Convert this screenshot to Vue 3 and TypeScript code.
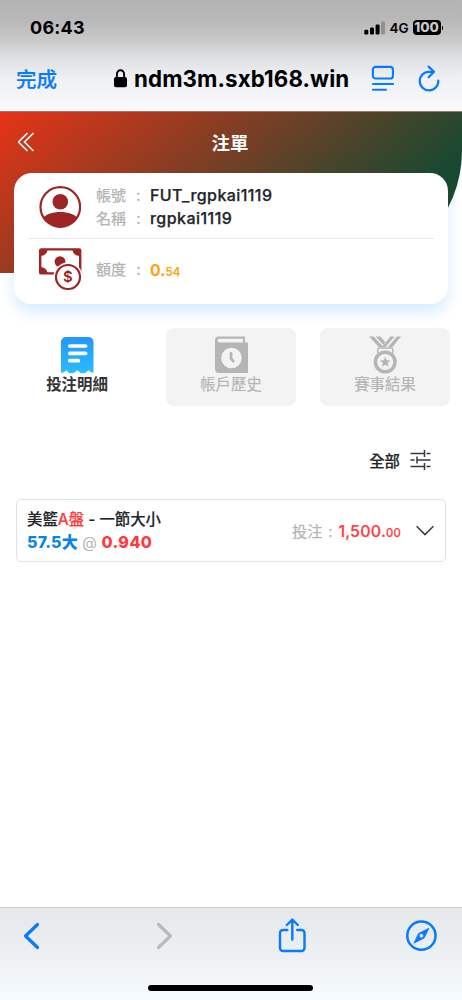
<script setup lang="ts">
import { ref } from 'vue'

interface Tab {
  id: string
  label: string
}

const tabs: Tab[] = [
  { id: 'bets', label: '投注明細' },
  { id: 'history', label: '帳戶歷史' },
  { id: 'results', label: '賽事結果' },
]
const active = ref('bets')
</script>

<template>
  <div class="screen">
    <header class="browser">
      <div class="status">
        <span class="time">06:43</span>
        <span class="right">
          <svg class="signal" width="22" height="14" viewBox="0 0 22 14">
            <rect x="0.3" y="8.8" width="4" height="4.6" rx="1.2" />
            <rect x="6" y="6.5" width="4" height="6.9" rx="1.2" />
            <rect x="11.6" y="3.5" width="4" height="9.9" rx="1.2" />
            <rect x="17" y="0.6" width="4" height="12.8" rx="1.2" fill="#919191" />
          </svg>
          <span class="net">4G</span>
          <span class="battery">100</span>
          <i class="tip"></i>
        </span>
      </div>
      <div class="address">
        <span class="done">完成</span>
        <span class="site">
          <svg width="13" height="19" viewBox="0 0 13 19">
            <path d="M2.9 9V5.2a3.6 4 0 0 1 7.2 0V9" fill="none" stroke="#000" stroke-width="1.9" />
            <rect x="0" y="8" width="13" height="10.2" rx="2" />
          </svg>
          <span class="host">ndm3m.sxb168.win</span>
        </span>
        <svg class="reader" width="23" height="27" viewBox="0 0 23 27" fill="none" stroke="#087aff" stroke-width="2.1" stroke-linecap="round">
          <rect x="1.9" y="1.9" width="20" height="11.6" rx="2.6" />
          <path d="M2 19h20M2 24.800h13" />
        </svg>
        <svg class="reload" width="22" height="27" viewBox="0 0 22 27" fill="none" stroke="#087aff" stroke-width="2.2" stroke-linecap="round" stroke-linejoin="round">
          <path d="M15.400 6.800H11A9.300 9.300 0 1 0 20.300 15.500" />
          <path d="M10.600 1.600l5.400 5.200-5.400 5.400" />
        </svg>
      </div>
    </header>

    <main>
      <section class="hero">
        <div class="title-row">
          <svg class="back" width="17" height="20" viewBox="0 0 17 20" fill="none" stroke="#fff" stroke-width="1.6">
            <path d="M9.500 1l-9 9 9 9M15.500 1l-9 9 9 9" />
          </svg>
          <h1>注單</h1>
        </div>
        <div class="card">
          <div class="row person">
            <svg class="avatar" width="42" height="42" viewBox="0 0 42 42">
              <defs><clipPath id="disc"><circle cx="21" cy="21" r="20" /></clipPath></defs>
              <circle cx="21.3" cy="21" r="19.800" fill="#fff" stroke="#9d2526" stroke-width="2.2" />
              <circle cx="21.3" cy="15.700" r="7.800" fill="#9d2526" />
              <path d="M3 33C9 23.500 33.500 23.500 39.500 33L34 43H8z" fill="#9d2526" clip-path="url(#disc)" />
            </svg>
            <div class="lines">
              <div class="line"><span class="key">帳號</span><span class="colon">:</span><b>FUT_rgpkai1119</b></div>
              <div class="line"><span class="key">名稱</span><span class="colon">:</span><b class="nick">rgpkai1119</b></div>
            </div>
          </div>
          <div class="row money">
            <svg class="cash" width="44" height="43" viewBox="0 0 44 43">
              <rect x="1.2" y="1.4" width="40" height="24" rx="1" fill="#fff" stroke="#9d2526" stroke-width="2.4" />
              <path d="M1 1h7.5C8.5 5 6 8 1 8zM41 1h-7.5C33.5 5 36 8 41 8zM1 26h7.5C8.5 22 6 19 1 19z" fill="#9d2526" />
              <circle cx="21" cy="13.6" r="5.4" fill="#9d2526" />
              <circle cx="29" cy="29" r="14.6" fill="#fff" />
              <circle cx="29" cy="29" r="12" fill="#fff" stroke="#9d2526" stroke-width="2.2" />
              <text x="29" y="34" text-anchor="middle" class="dollar">$</text>
            </svg>
            <div class="line"><span class="key">額度</span><span class="colon">:</span><b class="credit">0.<small>54</small></b></div>
          </div>
        </div>
      </section>

      <nav class="tabs">
        <button v-for="tab in tabs" :key="tab.id" class="tab" :class="{ active: active === tab.id }" @click="active = tab.id">
          <svg v-if="tab.id === 'bets'" width="34" height="38" viewBox="0 0 34 38">
            <defs>
              <linearGradient id="sheet" x1="0" y1="0" x2="0" y2="1">
                <stop offset="0" stop-color="#2496fd" />
                <stop offset="1" stop-color="#2bbcff" />
              </linearGradient>
            </defs>
            <path d="M6 1h22.500a5 5 0 0 1 5 5v31q-3 0-4.800-2.700-2.700 3-5.700 3t-5.800-3q-2.800 3-5.700 3t-5.300-3Q4.500 37 1 37V6a5 5 0 0 1 5-5z" fill="url(#sheet)" />
            <path d="M9.800 10h15.800M9.800 17.300h15.800M9.800 24.700h8.500" stroke="#fff" stroke-width="3.7" stroke-linecap="round" />
          </svg>
          <svg v-else-if="tab.id === 'history'" width="34" height="38" viewBox="0 0 34 38">
            <path d="M4.800.5H31v6h3V37H5a4 4 0 0 1-4-4V4.500a4 4 0 0 1 3.800-4z" fill="#b5b5b5" />
            <path d="M5.400 2.700H29v3.800H5.400a1.900 1.900 0 0 1 0-3.800z" fill="#f3f3f3" />
            <circle cx="17.500" cy="22" r="10.3" fill="#f3f3f3" />
            <path d="M17 17.500v5l2.200 2.700" fill="none" stroke="#b5b5b5" stroke-width="2.8" stroke-linecap="round" />
          </svg>
          <svg v-else width="34" height="38" viewBox="0 0 34 38">
            <path d="M1 .5h4.800l9.500 10.500h-4.500zM7.800.5h4.700l4.800 5.500-2.300 2.700zM22.500.5h4l-8.800 10.500h-4zM29 .5h4l-8.500 10.500h-4.500z" fill="#b5b5b5" />
            <path d="M9.800 17v-3.500a1.500 1.500 0 0 1 1.500-1.500h12a1.500 1.500 0 0 1 1.500 1.500V17" fill="none" stroke="#b5b5b5" stroke-width="1.5" />
            <circle cx="17.200" cy="26" r="9.800" fill="#f3f3f3" stroke="#b5b5b5" stroke-width="3.5" />
            <path d="M17.200 20.700l1.500 3.500 3.800.3-2.900 2.500.9 3.800-3.300-2-3.300 2 .9-3.800-2.900-2.500 3.800-.3z" fill="#b5b5b5" />
          </svg>
          <span>{{ tab.label }}</span>
        </button>
      </nav>

      <div class="filter">
        <span>全部</span>
        <svg width="22" height="20" viewBox="0 0 22 20" fill="none" stroke="#343a40" stroke-width="1.5">
          <path d="M.5 3.500h14M16.500 3.500h4M14.500 0v7M.5 10h4M7 10h13.500M7 6.500v7M.5 16.500h14M16.500 16.500h4M14.500 13v7" />
        </svg>
      </div>

      <article class="bet">
        <div class="bet-info">
          <div class="match">美籃<em>A盤</em> - 一節大小</div>
          <div class="odds"><span class="pick">57.5大</span> <span class="at">@</span> <span class="rate">0.940</span></div>
        </div>
        <div class="stake"><span>投注</span><i>:</i><b>1,500.<small>00</small></b></div>
        <svg width="18" height="11" viewBox="0 0 18 11" fill="none" stroke="#343a40" stroke-width="1.5">
          <path d="M.6 1.300L9 9.600l8.400-8.300" />
        </svg>
      </article>
    </main>

    <footer class="toolbar">
      <svg class="prev" width="17" height="28" viewBox="0 0 17 28" fill="none" stroke="#087aff" stroke-width="3.2" stroke-linecap="round" stroke-linejoin="round"><path d="M14.500 2.500L2.500 14l12 11.500" /></svg>
      <svg class="next" width="17" height="28" viewBox="0 0 17 28" fill="none" stroke="#b8b9bb" stroke-width="3.2" stroke-linecap="round" stroke-linejoin="round"><path d="M2.500 2.500L14.500 14 2.500 25.500" /></svg>
      <svg class="share" width="28" height="36" viewBox="0 0 28 36" fill="none" stroke="#087aff" stroke-width="2.4" stroke-linecap="round" stroke-linejoin="round">
        <path d="M9.300 12H5a3 3 0 0 0-3 3v15a3 3 0 0 0 3 3h18.500a3 3 0 0 0 3-3V15a3 3 0 0 0-3-3h-4.300M14.300 21.500V2M8.800 7l5.500-5.500L19.800 7" />
      </svg>
      <svg class="compass" width="32" height="32" viewBox="0 0 32 32">
        <circle cx="16.4" cy="15.700" r="14.1" fill="none" stroke="#087aff" stroke-width="2.5" />
        <path fill-rule="evenodd" d="M23.900 8.200l-4.700 9.800-10.300 5.200 4.700-9.800zM16.400 13.500a2.200 2.200 0 1 0 0 4.400 2.200 2.200 0 0 0 0-4.400z" fill="#087aff" stroke="#087aff" stroke-width=".8" stroke-linejoin="round" />
      </svg>
      <i class="home"></i>
    </footer>
  </div>
</template>

<style>
body {
  background: #fff;
}
</style>

<style scoped>
* {
  box-sizing: border-box;
}
.screen {
  width: 462px;
  height: 1000px;
  display: flex;
  flex-direction: column;
  overflow: hidden;
  background: #fff;
  color: #212529;
  font-family: Inter, "Noto Sans CJK TC", sans-serif;
}
svg {
  display: block;
  flex: none;
}
.browser {
  height: 111px;
  flex: none;
  border-bottom: 0;
  background: linear-gradient(#b3b3b3 0, #b8b8b8 20px, #c7c7c8 38px, #dfe0e2 58px, #eff0f3 78px, #f8fafe 111px);
  color: #000;
}
.status {
  height: 54px;
  padding: 1px 19px 0 30px;
  display: flex;
  align-items: center;
  justify-content: space-between;
}
.time {
  font-size: 18px;
  font-weight: 700;
  letter-spacing: 0.25px;
}
.right {
  display: flex;
  align-items: center;
}
.net {
  margin-left: 3.5px;
  font-size: 13.5px;
  font-weight: 600;
}
.battery {
  width: 28px;
  height: 15px;
  margin-left: 4px;
  border-radius: 4px;
  background: #000;
  color: #c9c9c9;
  font-size: 13.5px;
  font-weight: 800;
  line-height: 15px;
  text-align: center;
}
.tip {
  width: 1.5px;
  height: 4px;
  margin-left: 1px;
  border-radius: 0 2px 2px 0;
  background: #000;
}
.address {
  height: 50px;
  padding: 0 22px 2px 16px;
  display: flex;
  align-items: center;
}
.done {
  width: 98px;
  color: #087aff;
  font-size: 20.5px;
  font-weight: 500;
  -webkit-text-stroke: 0.2px;
}
.site {
  width: 257px;
  display: flex;
  align-items: center;
  gap: 7px;
}
.host {
  font-size: 22.3px;
  font-weight: 700;
  letter-spacing: 0.1px;
  white-space: nowrap;
}
.reload {
  margin-left: 24px;
}
.hero {
  position: relative;
  height: 162px;
  isolation: isolate;
}
.hero::before {
  content: "";
  position: absolute;
  inset: 0;
  z-index: -1;
  border-top: 1px solid #a7745f;
  border-bottom-right-radius: 122px;
  background: linear-gradient(140deg, #e73317 0%, #194930 78%);
}
.title-row {
  height: 62px;
  padding-left: 18px;
  display: grid;
  grid-template-columns: 17px 1fr 37px;
  align-items: center;
}
h1 {
  margin: 0;
  padding-bottom: 1px;
  color: #fff;
  font-size: 18.5px;
  font-weight: 700;
  text-align: center;
}
.card {
  position: relative;
  height: 131px;
  margin: 0 14px;
  padding: 0 14px;
  border-radius: 18px;
  background: #fff;
}
.card::before {
  content: "";
  position: absolute;
  inset: 0;
  z-index: -2;
  border-radius: 18px;
  box-shadow: 0 8px 16px #d5ebff;
}
.row {
  display: flex;
  align-items: center;
}
.person {
  height: 66px;
  padding: 2px 0 0 11px;
  gap: 15px;
  border-bottom: 1.5px solid #e6e6e6;
}
.money {
  height: 64px;
  padding: 0 0 3px 11px;
  gap: 13px;
}
.line {
  height: 23px;
  display: flex;
  align-items: center;
  font-size: 16px;
}
.key {
  width: 41px;
  padding-bottom: 2px;
  color: #b3b3b3;
  font-size: 15px;
  -webkit-text-stroke: 0.25px #b3b3b3;
}
.colon {
  width: 13px;
  padding-bottom: 1px;
  color: #b3b3b3;
  font-weight: 500;
  text-indent: -1px;
}
.line b {
  font-weight: 500;
  font-size: 16px;
  letter-spacing: 0.42px;
  -webkit-text-stroke: 0.25px;
}
.line .nick {
  letter-spacing: 0.46px;
}
.line .credit {
  color: #ff9f0a;
  font-weight: 600;
  letter-spacing: 0.1px;
}
.credit small {
  font-size: 11.5px;
  font-weight: 500;
}
.dollar {
  fill: #9d2526;
  font: 600 15px Inter, sans-serif;
}
.tabs {
  padding: 55px 12px 0;
  display: grid;
  grid-template-columns: repeat(3, 130px);
  gap: 24px;
}
.tab {
  height: 78px;
  padding: 8px 0 0;
  display: flex;
  flex-direction: column;
  align-items: center;
  gap: 1px;
  border: 0;
  border-radius: 8px;
  background: #f3f3f3;
  color: #b5b5b5;
  font: 400 15.4px/20px Inter, "Noto Sans CJK TC", sans-serif;
  -webkit-text-stroke: 0.15px;
}
.tab.active {
  background: #fff;
  color: #333;
  font-weight: 700;
  -webkit-text-stroke: 0;
}
.filter {
  height: 22px;
  margin-top: 43px;
  padding-right: 30px;
  display: flex;
  align-items: center;
  justify-content: flex-end;
  gap: 10px;
  font-size: 15.4px;
  font-weight: 500;
  -webkit-text-stroke: 0.2px;
}
.filter span {
  padding-bottom: 1px;
}
.bet {
  height: 63px;
  margin: 28px 16px 0;
  padding: 0 11px 0 10px;
  display: flex;
  align-items: center;
  border: 1px solid #dee2e6;
  border-radius: 5px;
}
.bet-info {
  flex: 1;
  padding-top: 1px;
  font-size: 15.4px;
  line-height: 23px;
  font-weight: 500;
}
.match {
  -webkit-text-stroke: 0.15px;
}
em {
  color: #ff3b41;
  font-style: normal;
}
.odds {
  font-size: 16px;
  letter-spacing: 0.2px;
}
.pick {
  color: #0a84e8;
  font-weight: 800;
}
.at {
  color: #b3b3b3;
  font-weight: 400;
  font-size: 15px;
}
.rate {
  color: #ff3b41;
  font-weight: 800;
  letter-spacing: 0.45px;
}
.stake {
  display: flex;
  align-items: baseline;
  margin-right: 15px;
  padding-bottom: 2px;
  color: #b3b3b3;
  font-size: 15.2px;
  -webkit-text-stroke: 0.2px;
}
.stake i {
  width: 16px;
  text-align: center;
  font-style: normal;
}
.stake b {
  color: #ff3b41;
  font-size: 16px;
  font-weight: 500;
  letter-spacing: 0.22px;
}
.stake small {
  font-size: 11.3px;
}
.toolbar {
  height: 93px;
  margin-top: auto;
  padding: 10px 25px 0 23px;
  display: grid;
  grid-template-columns: 133px 122px 127px 32px;
  grid-template-rows: 36px 1fr;
  align-items: center;
  border-top: 1px solid #cdced0;
  background: linear-gradient(#e5e8eb, #edf0f2 45px, #f6fbff 92px);
}
.home {
  grid-column: 1 / -1;
  justify-self: center;
  align-self: end;
  width: 165px;
  height: 6px;
  margin-bottom: 9px;
  border-radius: 3px;
  background: #000;
}
</style>
